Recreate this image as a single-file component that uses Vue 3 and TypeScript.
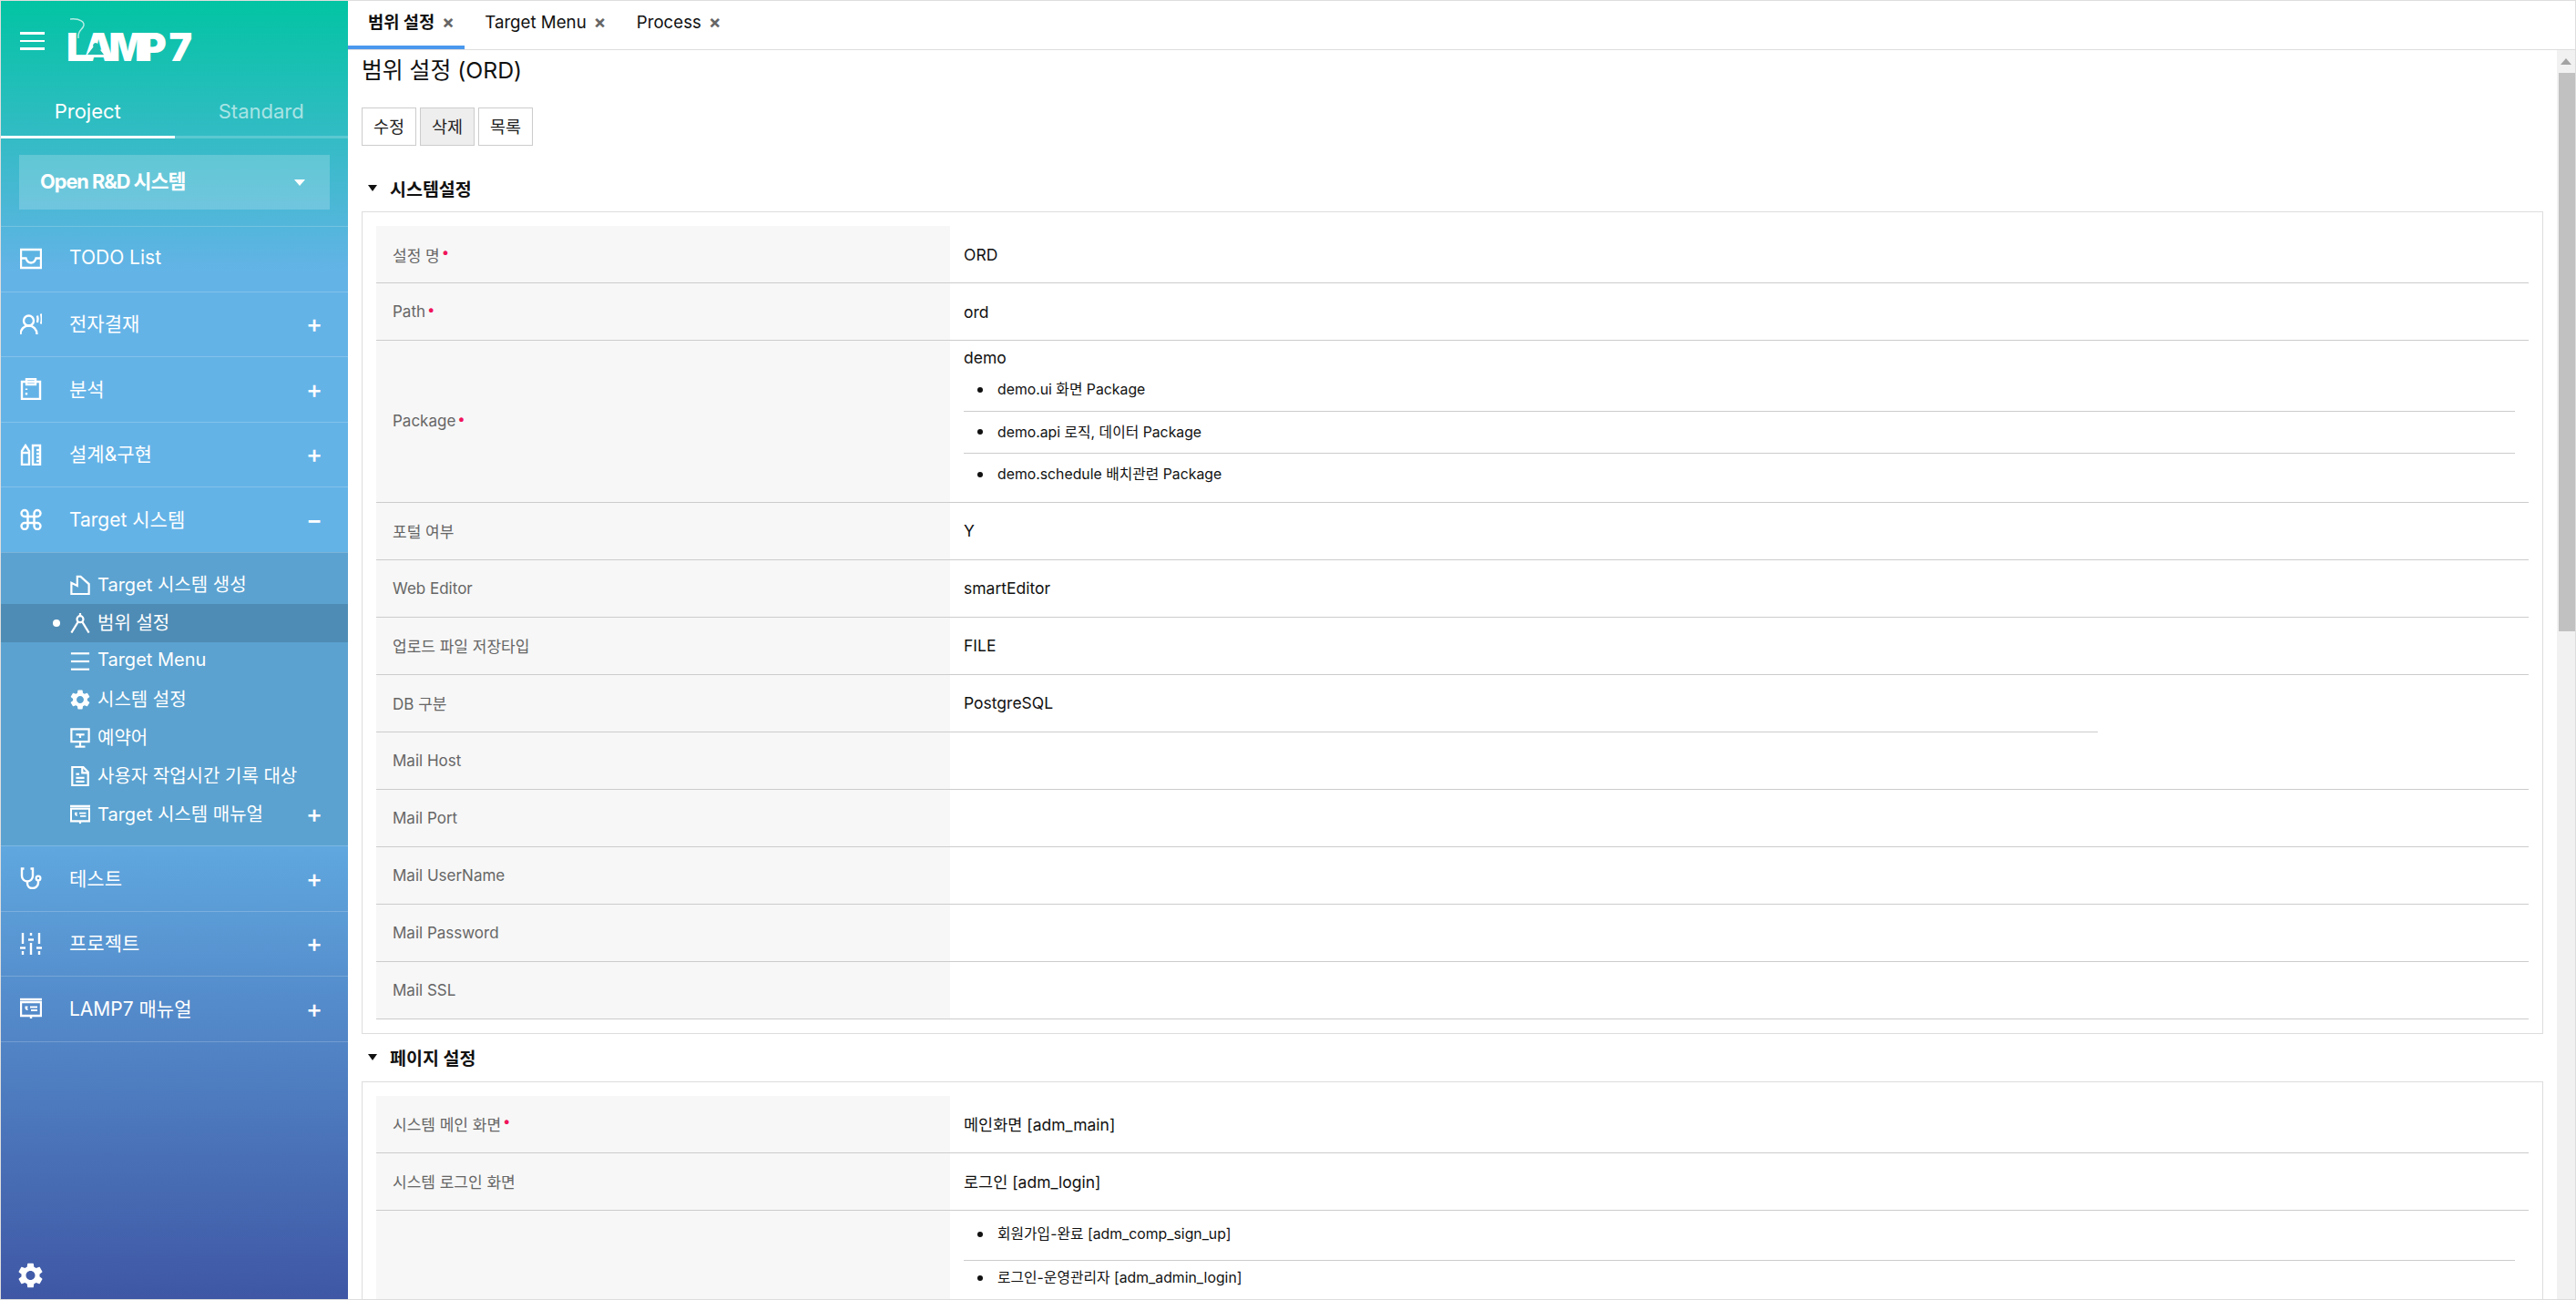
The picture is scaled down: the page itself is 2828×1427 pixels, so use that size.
<script setup lang="ts">
interface Icon { s?: string[]; f?: string[]; v?: string }
const gear = 'M19.14 12.94c.04-.3.06-.61.06-.94 0-.32-.02-.64-.07-.94l2.03-1.58c.18-.14.23-.41.12-.61l-1.92-3.32c-.12-.22-.37-.29-.59-.22l-2.39.96c-.5-.38-1.03-.7-1.62-.94l-.36-2.54c-.04-.24-.24-.41-.48-.41h-3.84c-.24 0-.43.17-.47.41l-.36 2.54c-.59.24-1.13.57-1.62.94l-2.39-.96c-.22-.08-.47 0-.59.22L2.74 8.87c-.12.21-.08.47.12.61l2.03 1.58c-.05.3-.09.63-.09.94s.02.64.07.94l-2.03 1.58c-.18.14-.23.41-.12.61l1.92 3.32c.12.22.37.29.59.22l2.39-.96c.5.38 1.03.7 1.62.94l.36 2.54c.05.24.24.41.48.41h3.84c.24 0 .44-.17.47-.41l.36-2.54c.59-.24 1.13-.56 1.62-.94l2.39.96c.22.08.47 0 .59-.22l1.92-3.32c.12-.22.07-.47-.12-.61l-2.01-1.58zM12 15.6c-1.98 0-3.6-1.62-3.6-3.6s1.62-3.6 3.6-3.6 3.6 1.62 3.6 3.6-1.62 3.6-3.6 3.6z'
const manual: Icon = { s: ['M0 2h24', 'M1 5h22v15H1z', 'M12 20v3'], f: ['M5.500 9.500h3V11H7.700a1 1 0 0 0 .8 1v2A3 3 0 0 1 5.500 12zM11 9.500h8v2h-8zM12 13h7v2h-7z'] }
const icons: Record<string, Icon> = {
  inbox: { s: ['M1 2h22v20H1z', 'M1 11.500h5.500c1 3.500 3 5 5.500 5s4.500-1.500 5.500-5H23'] },
  person: { s: ['M9.500 2.500a5.500 5.500 0 1 0 0 11 5.500 5.500 0 0 0 0 -11z', 'M0.500 23c0-5.500 4-9.500 9-9.500s9 4 9 9.500', 'M19 2.500c.8 2.500.8 5 0 7.500', 'M23 .5c1 3.500 1 7.500 0 11'] },
  clip: { s: ['M2 4h20v19H2z', 'M7 1h10v6H7z', 'M7 11.500v1.500', 'M7 16v2.500'] },
  tools: { s: ['M2 23V8l4-6 4 6v15z', 'M2 10h8', 'M14 2h8v21h-8z', 'M18 7h4', 'M18 11h4', 'M18 15h4', 'M18 19h4'] },
  command: { s: ['M8.500 8.500V5.500a3.500 3.500 0 1 0-3.500 3.500h14a3.500 3.500 0 1 0-3.500-3.500v14a3.500 3.500 0 1 0 3.500-3.500H5a3.500 3.500 0 1 0 3.500 3.500V8.500z'] },
  steth: { s: ['M4.500 1.500H2v8a6 6 0 0 0 12 0v-8h-2.500', 'M8 15.500v2c0 3.500 2.500 5.500 5.500 5.500s6.500-2 6.500-6v-2'], f: ['M20 8.500a3.500 3.500 0 1 0 0 7 3.500 3.500 0 0 0 0-7zm0 2.200a1.300 1.300 0 1 1 0 2.600 1.300 1.300 0 0 1 0-2.600z'] },
  sliders: { s: ['M3 0v12', 'M3 20v4', 'M0 16.500h6', 'M12 0v3', 'M12 11v13', 'M9 7.500h6', 'M21 0v12', 'M21 20v4', 'M18 16.500h6'] },
  box: { s: ['M1.500 23V9.500l7 3.500V2h4l10 9v12z'] },
  compass: { s: ['M12 3.500a3.800 3.800 0 1 0 0 7.600 3.800 3.800 0 0 0 0-7.600z', 'M12 0v3.500', 'M9.500 10.500L1.500 23.500', 'M14.500 10.500l8 13'] },
  menu: { s: ['M1 2.500h22', 'M1 12h22', 'M1 21.500h22'] },
  gear: { f: [gear], v: '2.300 2 19.400 20' },
  present: { s: ['M1.500 1.500h21v15h-21z', 'M12 16.500v6', 'M6 22.500h12', 'M7 8h10', 'M12 8v4'] },
  doc: { s: ['M2.500 1h13l6 6v16h-19z', 'M14.500 1v7h7', 'M7 9.500h4', 'M7 14h10', 'M7 18.500h10'] },
  manual,
}
interface Nav { label: string; icon: string; mark?: string }
const topNav: Nav[] = [
  { label: 'TODO List', icon: 'inbox' },
  { label: '전자결재', icon: 'person', mark: '+' },
  { label: '분석', icon: 'clip', mark: '+' },
  { label: '설계&구현', icon: 'tools', mark: '+' },
  { label: 'Target 시스템', icon: 'command', mark: '−' },
]
const subNav = [
  { label: 'Target 시스템 생성', icon: 'box' },
  { label: '범위 설정', icon: 'compass', active: true },
  { label: 'Target Menu', icon: 'menu' },
  { label: '시스템 설정', icon: 'gear' },
  { label: '예약어', icon: 'present' },
  { label: '사용자 작업시간 기록 대상', icon: 'doc' },
  { label: 'Target 시스템 매뉴얼', icon: 'manual', more: true },
]
const bottomNav: Nav[] = [
  { label: '테스트', icon: 'steth', mark: '+' },
  { label: '프로젝트', icon: 'sliders', mark: '+' },
  { label: 'LAMP7 매뉴얼', icon: 'manual', mark: '+' },
]
const tabs = [
  { label: '범위 설정', active: true },
  { label: 'Target Menu' },
  { label: 'Process' },
]
interface Row { th: string; td?: string; req?: boolean; short?: boolean; head?: string; list?: string[]; alt?: boolean }
const systemRows: Row[] = [
  { th: '설정 명', td: 'ORD', req: true },
  { th: 'Path', td: 'ord', req: true },
  { th: 'Package', req: true, head: 'demo', list: ['demo.ui 화면 Package', 'demo.api 로직, 데이터 Package', 'demo.schedule 배치관련 Package'] },
  { th: '포털 여부', td: 'Y' },
  { th: 'Web Editor', td: 'smartEditor' },
  { th: '업로드 파일 저장타입', td: 'FILE' },
  { th: 'DB 구분', td: 'PostgreSQL', short: true },
  { th: 'Mail Host' },
  { th: 'Mail Port' },
  { th: 'Mail UserName' },
  { th: 'Mail Password' },
  { th: 'Mail SSL' },
]
const pageRows: Row[] = [
  { th: '시스템 메인 화면', td: '메인화면 [adm_main]', req: true },
  { th: '시스템 로그인 화면', td: '로그인 [adm_login]' },
  { th: '', alt: true, list: ['회원가입-완료 [adm_comp_sign_up]', '로그인-운영관리자 [adm_admin_login]'] },
]
const sections = [
  { title: '시스템설정', rows: systemRows },
  { title: '페이지 설정', rows: pageRows },
]
</script>

<template>
  <div class="app">
    <aside class="side">
      <div class="brand">
        <span class="burger"><i></i><i></i><i></i></span>
        <span class="logo">
          <svg class="wisp" viewBox="0 0 30 30" width="30" height="30"><path d="M2 3c10-1 18 3 14 9-2 3-6 5-5 12" fill="none" stroke="#fff" stroke-opacity=".7" stroke-width="1.500"/></svg>
          <svg class="lamp" viewBox="0 0 24 18" width="24" height="18"><path d="M12 1a3 3 0 0 1 2.500 4.500L21 14H3l6.500-8.500A3 3 0 0 1 12 1z" fill="#1cbcae"/><path d="M2 16h20" stroke="#fff" stroke-width="2"/></svg>
          LAMP 7
        </span>
      </div>
      <div class="stabs">
        <div class="stab on">Project</div>
        <div class="stab">Standard</div>
      </div>
      <div class="picker"><b>Open R&amp;D 시스템</b><i class="caret"></i></div>
      <nav class="nav">
        <div v-for="n in topNav" :key="n.label" class="item">
          <svg class="ico" :viewBox="icons[n.icon].v || '0 0 24 24'"><path v-for="d in icons[n.icon].s" :key="d" :d="d" class="st"/><path v-for="d in icons[n.icon].f" :key="d" :d="d" class="fl"/></svg>
          <span class="lbl">{{ n.label }}</span>
          <span v-if="n.mark" class="mark">{{ n.mark }}</span>
        </div>
        <div class="sub">
          <div v-for="n in subNav" :key="n.label" class="subitem" :class="{ active: n.active }">
            <i v-if="n.active" class="dot"></i>
            <svg class="subico" :viewBox="icons[n.icon].v || '0 0 24 24'"><path v-for="d in icons[n.icon].s" :key="d" :d="d" class="st"/><path v-for="d in icons[n.icon].f" :key="d" :d="d" class="fl"/></svg>
            <span class="lbl">{{ n.label }}</span>
            <span v-if="n.more" class="mark">+</span>
          </div>
        </div>
        <div v-for="n in bottomNav" :key="n.label" class="item">
          <svg class="ico" :viewBox="icons[n.icon].v || '0 0 24 24'"><path v-for="d in icons[n.icon].s" :key="d" :d="d" class="st"/><path v-for="d in icons[n.icon].f" :key="d" :d="d" class="fl"/></svg>
          <span class="lbl">{{ n.label }}</span>
          <span v-if="n.mark" class="mark">{{ n.mark }}</span>
        </div>
      </nav>
      <div class="foot">
        <svg class="footgear" viewBox="2.300 2 19.400 20"><path :d="gear" class="fl"/></svg>
      </div>
    </aside>
    <main class="main">
      <header class="tabs">
        <div v-for="t in tabs" :key="t.label" class="tab" :class="{ on: t.active }">{{ t.label }}<span class="x">×</span></div>
      </header>
      <div class="body">
        <div class="content">
          <h1 class="title">범위 설정 (ORD)</h1>
          <div class="btns">
            <button class="btn">수정</button>
            <button class="btn hover">삭제</button>
            <button class="btn">목록</button>
          </div>
          <section v-for="s in sections" :key="s.title">
            <h2 class="sec"><i class="tri"></i>{{ s.title }}</h2>
            <div class="panel">
              <div v-for="r in s.rows" :key="r.th + (r.td || '')" class="row">
                <div class="th">{{ r.th }}<span v-if="r.req" class="req">•</span></div>
                <div class="td" :class="{ short: r.short, stack: r.list, alt: r.alt }">
                  <template v-if="r.list">
                    <div v-if="r.head" class="head">{{ r.head }}</div>
                    <ul class="ul"><li v-for="l in r.list" :key="l">{{ l }}</li></ul>
                  </template>
                  <template v-else>{{ r.td }}</template>
                </div>
              </div>
            </div>
          </section>
        </div>
        <div class="bar">
          <div class="up"><i></i></div>
          <div class="thumb"></div>
        </div>
      </div>
    </main>
  </div>
</template>

<style scoped>
.app { width: 2828px; height: 1427px; box-sizing: border-box; border: 1px solid #ddd; display: flex; overflow: hidden; background: #fff; font-family: Inter, "Noto Sans CJK KR", sans-serif; color: #111; }
.side { width: 381px; flex: none; display: flex; flex-direction: column; color: #fff; background: linear-gradient(180deg, #02c4a3 0, #64b3e7 21%, #64b3e7 60%, #3f57a5 100%); }
.brand { height: 99px; box-sizing: border-box; display: flex; align-items: flex-start; padding: 34px 0 0 21px; flex: none; }
.burger { width: 27px; display: flex; flex-direction: column; gap: 6px; flex: none; }
.burger i { height: 2.500px; background: #fff; display: block; }
.logo { position: relative; margin: -8px 0 0 24px; font: 900 43px/48px Inter, sans-serif; letter-spacing: -6px; word-spacing: 6px; white-space: nowrap; }
.wisp { position: absolute; left: 2px; top: -9px; }
.lamp { position: absolute; left: 20px; top: 19px; }
.stabs { display: flex; height: 52px; flex: none; }
.stab { flex: 1; text-align: center; font-size: 22px; line-height: 44px; color: rgba(255,255,255,.6); border-bottom: 3px solid rgba(255,255,255,.2); box-sizing: border-box; }
.stab.on { color: #fff; border-bottom-color: #fff; }
.picker { margin: 18px 20px; height: 60px; background: rgba(255,255,255,.2); display: flex; align-items: center; justify-content: space-between; padding: 0 27px 0 23px; flex: none; }
.picker b { font-size: 21.700px; letter-spacing: -1px; font-weight: 700; line-height: 56px; padding-bottom: 2px; }
.caret { width: 0; height: 0; border: 6px solid transparent; border-top: 7px solid #fff; border-bottom: 0; }
.nav { flex: none; }
.item { height: 71.500px; box-sizing: border-box; display: flex; align-items: center; padding: 0 30px 0 21px; border-top: 1px solid rgba(255,255,255,.2); }
.item:nth-last-child(1) { border-bottom: 1px solid rgba(255,255,255,.2); height: 72.500px; }
.ico { width: 24px; height: 24px; flex: none; margin-right: 30px; }
.st { fill: none; stroke: #fff; stroke-width: 2.4; }
.fl { fill: #fff; }
.lbl { font-size: 21px; flex: 1; white-space: nowrap; padding-bottom: 3px; }
.subitem .lbl { font-size: 20px; }
.mark { font-size: 27px; line-height: 1; font-weight: 500; width: 16px; text-align: center; }
.sub { background: #5ba2d0; padding: 14px 0 13.500px; border-top: 1px solid rgba(255,255,255,.2); }
.subitem { height: 42px; display: flex; align-items: center; padding: 0 30px 0 76px; position: relative; }
.subitem.active { background: #4f8cb5; }
.dot { position: absolute; left: 57px; width: 8px; height: 8px; border-radius: 50%; background: #fff; }
.subico { width: 22px; height: 22px; margin-right: 8px; flex: none; }
.foot { margin-top: auto; padding: 0 0 12px 19px; }
.footgear { width: 27px; height: 28px; display: block; }
.main { flex: 1; min-width: 0; display: flex; flex-direction: column; }
.tabs { height: 54px; box-sizing: border-box; border-bottom: 1px solid #ddd; display: flex; flex: none; }
.tab { height: 53px; padding: 0 15px 0 22px; font-size: 18.700px; line-height: 46px; white-space: nowrap; box-sizing: border-box; }
.tab.on { font-weight: 700; border-bottom: 4px solid #4a98ee; }
.x { color: #666; font-weight: 700; margin-left: 8px; font-size: 20px; display: inline-block; width: 10px; text-align: center; }
.body { flex: 1; min-height: 0; display: flex; }
.content { flex: 1; min-width: 0; overflow: hidden; padding: 0 15px; }
.title { margin: 0; font-size: 24.800px; font-weight: 400; line-height: 44px; }
.btns { display: flex; gap: 4px; margin-top: 19px; }
.btn { width: 60px; height: 42px; padding: 0 0 2px; border: 1px solid #ccc; background: #fff; font: 400 18.500px Inter, "Noto Sans CJK KR", sans-serif; color: #222; }
.btn.hover { background: #eee; }
.sec { margin: 0; height: 52px; display: flex; align-items: center; font-size: 19.500px; font-weight: 700; padding-left: 7px; }
.btns + section .sec { margin-top: 20px; }
.tri { width: 0; height: 0; border: 5px solid transparent; border-top: 7px solid #111; border-bottom: 0; margin-right: 14px; }
.panel { border: 1px solid #ddd; padding: 15px; }
.row { display: flex; min-height: 63px; box-sizing: border-box; }
.th { width: 630px; flex: none; box-sizing: border-box; background: #f7f7f7; border-bottom: 1px solid #ccc; padding-left: 18px; display: flex; align-items: center; font-size: 17px; color: #666; }
.req { color: #f0145a; font-size: 15px; margin-left: 2px; transform: translateY(-3px); }
.td { flex: 1; min-width: 0; box-sizing: border-box; border-bottom: 1px solid #ccc; padding: 0 15px; display: flex; align-items: center; font-size: 17.500px; }
.td.short { border-bottom: 0; padding-bottom: 1px; background: linear-gradient(#ccc, #ccc) left bottom / 1260px 1px no-repeat; }
.td.stack { display: block; padding: 7px 15px 6px; }
.head { line-height: 24px; }
.ul { margin: 0; padding: 0; list-style: none; }
.ul li { font-size: 15.800px; line-height: 45px; height: 46.500px; box-sizing: border-box; padding-left: 37px; border-bottom: 1px solid #ccc; position: relative; }
.ul li:last-child { border-bottom: 0; }
.ul li::before { content: ""; position: absolute; left: 15px; top: 19.500px; width: 6px; height: 6px; border-radius: 50%; background: #111; }
.td.alt .ul li { line-height: 38px; height: 48px; }
.td.alt .ul li::before { top: 16px; }
.bar { width: 20px; flex: none; background: #f1f1f1; }
.up { height: 25px; display: flex; align-items: center; justify-content: center; }
.up i { width: 0; height: 0; border: 6px solid transparent; border-bottom: 7px solid #a3a3a3; border-top: 0; }
.thumb { margin-left: 2px; height: 613px; background: #c1c1c1; }
</style>

<style>
html, body { margin: 0; overflow: hidden; }
</style>
